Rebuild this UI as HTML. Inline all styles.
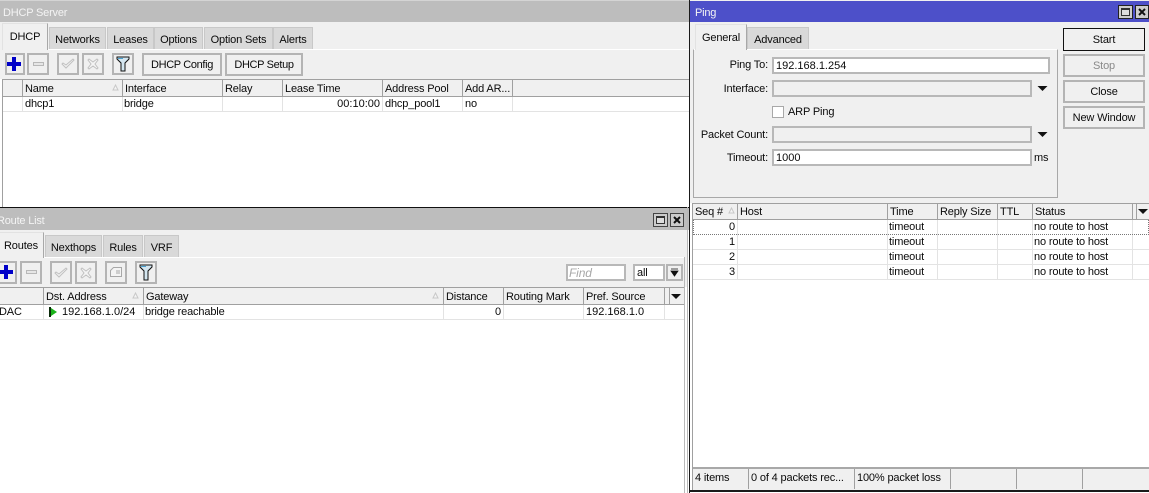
<!DOCTYPE html>
<html><head><meta charset="utf-8"><style>
html,body{margin:0;padding:0;background:#fff}
#r{position:relative;width:1149px;height:493px;overflow:hidden;background:#fff;font:11px/16px "Liberation Sans",sans-serif;letter-spacing:-.15px;color:#0a0a0a}
#r div,#r svg{position:absolute;box-sizing:border-box}
.t{white-space:nowrap}
.n{letter-spacing:0}
.w{color:#f4f4f4;letter-spacing:-.2px}
.tab{background:#d9d9d9;border:1px solid #c8c8c8;border-bottom:0;text-align:center;padding-top:4px}
.act{background:#f0f0f0;border:1px solid #e2e2e2;border-right-color:#a8a8a8;border-bottom:0;text-align:center;padding-top:5px}
.b{background:#f0f0f0;border:2px solid #b4b4b4;text-align:center;line-height:21px}
.c{letter-spacing:-.35px}
.d{width:1px;background:#a0a0a0}
.dl{width:1px;background:#e3e3e3}
.h{height:1px}
.f{border:2px solid #b8b8b8;background:#fff;padding-left:2px;line-height:15px}
.f2{border:2px solid #b8b8b8;background:#f0f0f0}
.l{text-align:right;white-space:nowrap}
</style></head><body><div id="r">

<!-- DHCP window -->
<div style="left:0;top:0;width:689px;height:207px;background:#fff"></div>
<div style="left:0;top:0;width:689px;height:22px;background:#bdbdbd;border-top:1px solid #d4d4d4"></div>
<div class="t w" style="left:3px;top:5px">DHCP Server</div>
<div style="left:0;top:22px;width:689px;height:57px;background:#f0f0f0"></div>
<div class="h" style="left:47px;top:49px;width:642px;background:#fff"></div>
<div class="h" style="left:2px;top:49px;width:1px;background:#fff"></div>
<div class="tab t" style="left:49px;top:27px;width:57px;height:22px">Networks</div>
<div class="tab t" style="left:107px;top:27px;width:47px;height:22px">Leases</div>
<div class="tab t" style="left:154px;top:27px;width:49px;height:22px">Options</div>
<div class="tab t" style="left:204px;top:27px;width:69px;height:22px">Option Sets</div>
<div class="tab t" style="left:273px;top:27px;width:40px;height:22px">Alerts</div>
<div class="act t" style="left:2px;top:23px;width:46px;height:27px">DHCP</div>

<div class="b" style="left:5px;top:53px;width:20px;height:22px"></div>
<div style="left:12px;top:57px;width:4px;height:14px;background:#0000c8"></div>
<div style="left:7px;top:62px;width:14px;height:4px;background:#0000c8"></div>
<div class="b" style="left:27px;top:53px;width:22px;height:22px"></div>
<div style="left:33px;top:62px;width:11px;height:4px;background:#e6e6e6;border:1px solid #b8b8b8"></div>
<div class="b" style="left:57px;top:53px;width:22px;height:22px"></div>
<svg style="left:61px;top:58px" width="14" height="12"><path d="M1 6l4 4 8-8-1-1-7 6-3-2z" fill="#f4f4f4" stroke="#c0c0c0"/></svg>
<div class="b" style="left:82px;top:53px;width:22px;height:22px"></div>
<svg style="left:87px;top:58px" width="12" height="12"><path d="M1 2l1-1 4 3 4-3 1 1-3 4 3 4-1 1-4-3-4 3-1-1 3-4z" fill="#f4f4f4" stroke="#c0c0c0"/></svg>
<div class="b" style="left:112px;top:53px;width:22px;height:22px"></div>
<svg style="left:116px;top:56px" width="14" height="16"><path d="M1 1h12v2l-4 4v8h-4v-8l-4-4z" fill="#d4e6f0" stroke="#111"/><path d="M2 2h5v1H2z" fill="#4aa0d0"/></svg>
<div class="b t c" style="left:142px;top:53px;width:80px;height:23px">DHCP Config</div>
<div class="b t c" style="left:225px;top:53px;width:78px;height:23px">DHCP Setup</div>

<div style="left:2px;top:79px;width:687px;height:18px;background:#f0f0f0;border-top:1px solid #a0a0a0;border-bottom:1px solid #a0a0a0"></div>
<div class="h" style="left:2px;top:111px;width:687px;background:#e3e3e3"></div>
<div style="left:2px;top:79px;width:1px;height:128px;background:#a0a0a0"></div>
<div class="d" style="left:22px;top:80px;height:16px"></div>
<div class="d" style="left:122px;top:80px;height:16px"></div>
<div class="d" style="left:222px;top:80px;height:16px"></div>
<div class="d" style="left:282px;top:80px;height:16px"></div>
<div class="d" style="left:382px;top:80px;height:16px"></div>
<div class="d" style="left:462px;top:80px;height:16px"></div>
<div class="d" style="left:512px;top:80px;height:16px"></div>
<div class="dl" style="left:22px;top:97px;height:14px"></div>
<div class="dl" style="left:122px;top:97px;height:14px"></div>
<div class="dl" style="left:222px;top:97px;height:14px"></div>
<div class="dl" style="left:282px;top:97px;height:14px"></div>
<div class="dl" style="left:382px;top:97px;height:14px"></div>
<div class="dl" style="left:462px;top:97px;height:14px"></div>
<div class="dl" style="left:512px;top:97px;height:14px"></div>
<div class="t" style="left:25px;top:81px">Name</div>
<svg style="left:112px;top:84px" width="7" height="7"><path d="M3.500 1L6 6H1z" fill="#f4f4f4" stroke="#c8c8c8"/></svg>
<div class="t" style="left:125px;top:81px">Interface</div>
<div class="t" style="left:225px;top:81px">Relay</div>
<div class="t" style="left:285px;top:81px">Lease Time</div>
<div class="t" style="left:385px;top:81px">Address Pool</div>
<div class="t" style="left:465px;top:81px">Add AR...</div>
<div class="t" style="left:25px;top:96px">dhcp1</div>
<div class="t" style="left:124px;top:96px">bridge</div>
<div class="l n" style="left:300px;width:80px;top:96px">00:10:00</div>
<div class="t" style="left:385px;top:96px">dhcp_pool1</div>
<div class="t" style="left:465px;top:96px">no</div>

<!-- Route window -->
<div class="h" style="left:0;top:207px;width:690px;background:#111"></div>
<div style="left:0;top:208px;width:689px;height:22px;background:#bdbdbd"></div>
<div class="t w" style="left:-3px;top:213px">Route List</div>
<div style="left:653px;top:213px;width:15px;height:14px;border:1px solid #444;background:#ccc"></div>
<div style="left:656px;top:216px;width:9px;height:8px;border:1px solid #333;border-top-width:2px;background:#ddd"></div>
<div style="left:670px;top:213px;width:14px;height:14px;border:1px solid #444;background:#ccc"></div>
<svg style="left:673px;top:216px" width="8" height="8"><path d="M1 1l6 6M7 1l-6 6" stroke="#111" stroke-width="2"/></svg>
<div style="left:0;top:230px;width:688px;height:57px;background:#f0f0f0"></div>
<div class="h" style="left:44px;top:257px;width:640px;background:#fff"></div>
<div style="left:684px;top:257px;width:1px;height:236px;background:#b8b8b8"></div>
<div class="tab t" style="left:45px;top:235px;width:57px;height:22px">Nexthops</div>
<div class="tab t" style="left:103px;top:235px;width:40px;height:22px">Rules</div>
<div class="tab t" style="left:144px;top:235px;width:35px;height:22px">VRF</div>
<div class="act t" style="left:-2px;top:232px;width:46px;height:26px">Routes</div>

<div class="b" style="left:-3px;top:261px;width:20px;height:23px"></div>
<div style="left:4px;top:265px;width:4px;height:14px;background:#0000c8"></div>
<div style="left:-1px;top:270px;width:14px;height:4px;background:#0000c8"></div>
<div class="b" style="left:20px;top:261px;width:22px;height:23px"></div>
<div style="left:26px;top:270px;width:11px;height:4px;background:#e6e6e6;border:1px solid #b8b8b8"></div>
<div class="b" style="left:50px;top:261px;width:22px;height:23px"></div>
<svg style="left:54px;top:267px" width="14" height="12"><path d="M1 6l4 4 8-8-1-1-7 6-3-2z" fill="#f4f4f4" stroke="#c0c0c0"/></svg>
<div class="b" style="left:75px;top:261px;width:22px;height:23px"></div>
<svg style="left:80px;top:267px" width="12" height="12"><path d="M1 2l1-1 4 3 4-3 1 1-3 4 3 4-1 1-4-3-4 3-1-1 3-4z" fill="#f4f4f4" stroke="#c0c0c0"/></svg>
<div class="b" style="left:105px;top:261px;width:22px;height:23px"></div>
<svg style="left:109px;top:266px" width="14" height="12"><path d="M1.500 4.500l3-3h8v9h-11zM7 5h4M7 7h4" fill="#f4f4f4" stroke="#a8a8a8"/></svg>
<div class="b" style="left:135px;top:261px;width:22px;height:23px"></div>
<svg style="left:139px;top:264px" width="14" height="17"><path d="M1 1h12v2l-4 4v9h-4v-9l-4-4z" fill="#d4e6f0" stroke="#111"/><path d="M2 2h5v1H2z" fill="#4aa0d0"/></svg>
<div class="f t" style="left:566px;top:264px;width:60px;height:17px;color:#a8a8a8;font-style:italic;padding-left:1px;font-size:12px">Find</div>
<div class="f t" style="left:633px;top:264px;width:32px;height:17px">all</div>
<div class="b" style="left:666px;top:264px;width:17px;height:17px"></div>
<svg style="left:670px;top:268px" width="9" height="9"><path d="M1 1h7M1 3h7L4.500 8z" fill="#111" stroke="#111" stroke-width=".8"/></svg>

<div style="left:0;top:287px;width:684px;height:18px;background:#f0f0f0;border-top:1px solid #a0a0a0;border-bottom:1px solid #a0a0a0"></div>
<div class="h" style="left:0;top:319px;width:684px;background:#e3e3e3"></div>
<div class="d" style="left:43px;top:288px;height:16px"></div>
<div class="d" style="left:143px;top:288px;height:16px"></div>
<div class="d" style="left:443px;top:288px;height:16px"></div>
<div class="d" style="left:503px;top:288px;height:16px"></div>
<div class="d" style="left:583px;top:288px;height:16px"></div>
<div class="d" style="left:664px;top:288px;height:16px"></div>
<div class="d" style="left:669px;top:288px;height:16px"></div>
<div class="dl" style="left:43px;top:305px;height:14px"></div>
<div class="dl" style="left:143px;top:305px;height:14px"></div>
<div class="dl" style="left:443px;top:305px;height:14px"></div>
<div class="dl" style="left:503px;top:305px;height:14px"></div>
<div class="dl" style="left:583px;top:305px;height:14px"></div>
<div class="dl" style="left:664px;top:305px;height:14px"></div>
<div class="t" style="left:46px;top:289px">Dst. Address</div>
<svg style="left:132px;top:292px" width="7" height="7"><path d="M3.500 1L6 6H1z" fill="#f4f4f4" stroke="#c8c8c8"/></svg>
<div class="t" style="left:146px;top:289px">Gateway</div>
<svg style="left:432px;top:292px" width="7" height="7"><path d="M3.500 1L6 6H1z" fill="#f4f4f4" stroke="#c8c8c8"/></svg>
<div class="t" style="left:446px;top:289px">Distance</div>
<div class="t" style="left:506px;top:289px">Routing Mark</div>
<div class="t" style="left:586px;top:289px">Pref. Source</div>
<svg style="left:670px;top:293px" width="12" height="7"><path d="M1 1h10L6 6z" fill="#111"/></svg>
<div class="t" style="left:-1px;top:304px">DAC</div>
<svg style="left:48px;top:306px" width="10" height="12"><rect x="1" y="1" width="2" height="10" fill="#0a2a0a"/><path d="M3 2l6 4-6 4z" fill="#19b219"/></svg>
<div class="t n" style="left:62px;top:304px">192.168.1.0/24</div>
<div class="t" style="left:145px;top:304px">bridge reachable</div>
<div class="l" style="left:440px;width:61px;top:304px">0</div>
<div class="t n" style="left:586px;top:304px">192.168.1.0</div>

<div style="left:687px;top:207px;width:1px;height:286px;background:#b8b8b8"></div>
<div style="left:689px;top:0;width:1px;height:493px;background:#1a1a1a"></div>

<!-- Ping window -->
<div style="left:690px;top:0;width:459px;height:490px;background:#fff"></div>
<div style="left:690px;top:0;width:459px;height:203px;background:#f0f0f0"></div>
<div style="left:690px;top:1px;width:459px;height:21px;background:#4d50c9"></div>
<div class="t w" style="left:695px;top:5px">Ping</div>
<div style="left:1118px;top:5px;width:15px;height:14px;border:1px solid #222;background:#ccc"></div>
<div style="left:1121px;top:8px;width:9px;height:8px;border:1px solid #333;border-top-width:2px;background:#ddd"></div>
<div style="left:1135px;top:5px;width:14px;height:14px;border:1px solid #222;background:#ccc"></div>
<svg style="left:1138px;top:8px" width="8" height="8"><path d="M1 1l6 6M7 1l-6 6" stroke="#111" stroke-width="2"/></svg>

<div style="left:693px;top:49px;width:365px;height:149px;border:1px solid #a8a8a8;border-top-color:#fff;background:#f0f0f0"></div>
<div class="tab t" style="left:747px;top:27px;width:62px;height:22px">Advanced</div>
<div class="act t" style="left:695px;top:24px;width:52px;height:26px">General</div>

<div class="l" style="left:690px;width:78px;top:57px">Ping To:</div>
<div class="f t n" style="left:772px;top:57px;width:278px;height:17px">192.168.1.254</div>
<div class="l" style="left:690px;width:78px;top:81px">Interface:</div>
<div class="f2" style="left:772px;top:80px;width:260px;height:17px"></div>
<svg style="left:1037px;top:85px" width="11" height="7"><path d="M0.500 1h10L5.500 6z" fill="#111"/></svg>
<div style="left:772px;top:106px;width:12px;height:12px;border:1px solid #a8a8a8;background:#fff"></div>
<div class="t" style="left:788px;top:104px">ARP Ping</div>
<div class="l" style="left:690px;width:78px;top:127px">Packet Count:</div>
<div class="f2" style="left:772px;top:126px;width:260px;height:17px"></div>
<svg style="left:1037px;top:131px" width="11" height="7"><path d="M0.500 1h10L5.500 6z" fill="#111"/></svg>
<div class="l" style="left:690px;width:78px;top:150px">Timeout:</div>
<div class="f t n" style="left:772px;top:149px;width:260px;height:17px">1000</div>
<div class="t" style="left:1034px;top:150px">ms</div>

<div class="b" style="left:1063px;top:28px;width:82px;height:23px;border-width:1px;border-color:#111;line-height:23px">Start</div>
<div class="b" style="left:1063px;top:54px;width:82px;height:23px;color:#8a8a8a">Stop</div>
<div class="b" style="left:1063px;top:80px;width:82px;height:23px">Close</div>
<div class="b" style="left:1063px;top:106px;width:82px;height:23px">New Window</div>

<div style="left:693px;top:203px;width:456px;height:17px;background:#f0f0f0;border-top:1px solid #a0a0a0;border-bottom:1px solid #a0a0a0"></div>
<div class="d" style="left:737px;top:204px;height:15px"></div>
<div class="d" style="left:887px;top:204px;height:15px"></div>
<div class="d" style="left:937px;top:204px;height:15px"></div>
<div class="d" style="left:997px;top:204px;height:15px"></div>
<div class="d" style="left:1032px;top:204px;height:15px"></div>
<div class="d" style="left:1132px;top:204px;height:15px"></div>
<div class="d" style="left:1136px;top:204px;height:15px"></div>
<div class="dl" style="left:737px;top:220px;height:59px"></div>
<div class="dl" style="left:887px;top:220px;height:59px"></div>
<div class="dl" style="left:937px;top:220px;height:59px"></div>
<div class="dl" style="left:997px;top:220px;height:59px"></div>
<div class="dl" style="left:1032px;top:220px;height:59px"></div>
<div class="dl" style="left:1132px;top:220px;height:59px"></div>
<div class="h" style="left:693px;top:249px;width:456px;background:#e3e3e3"></div>
<div class="h" style="left:693px;top:264px;width:456px;background:#e3e3e3"></div>
<div class="h" style="left:693px;top:279px;width:456px;background:#e3e3e3"></div>
<div style="left:693px;top:220px;width:456px;height:15px;border:1px dotted #777;border-top:0"></div>
<div class="t" style="left:695px;top:204px">Seq #</div>
<svg style="left:728px;top:207px" width="7" height="7"><path d="M3.500 1L6 6H1z" fill="#f4f4f4" stroke="#c8c8c8"/></svg>
<div class="t" style="left:740px;top:204px">Host</div>
<div class="t" style="left:890px;top:204px">Time</div>
<div class="t" style="left:940px;top:204px">Reply Size</div>
<div class="t" style="left:1000px;top:204px">TTL</div>
<div class="t" style="left:1035px;top:204px">Status</div>
<svg style="left:1137px;top:208px" width="12" height="7"><path d="M1 1h10L6 6z" fill="#111"/></svg>

<div class="l" style="left:700px;width:35px;top:219px">0</div>
<div class="t" style="left:889px;top:219px">timeout</div>
<div class="t" style="left:1034px;top:219px">no route to host</div>
<div class="l" style="left:700px;width:35px;top:234px">1</div>
<div class="t" style="left:889px;top:234px">timeout</div>
<div class="t" style="left:1034px;top:234px">no route to host</div>
<div class="l" style="left:700px;width:35px;top:249px">2</div>
<div class="t" style="left:889px;top:249px">timeout</div>
<div class="t" style="left:1034px;top:249px">no route to host</div>
<div class="l" style="left:700px;width:35px;top:264px">3</div>
<div class="t" style="left:889px;top:264px">timeout</div>
<div class="t" style="left:1034px;top:264px">no route to host</div>

<div style="left:692px;top:203px;width:1px;height:287px;background:#a0a0a0"></div>
<div style="left:693px;top:467px;width:456px;height:23px;background:#f0f0f0;border-top:2px solid #a8a8a8"></div>
<div class="d" style="left:748px;top:469px;height:20px"></div>
<div class="d" style="left:854px;top:469px;height:20px"></div>
<div class="d" style="left:950px;top:469px;height:20px"></div>
<div class="d" style="left:1016px;top:469px;height:20px"></div>
<div class="d" style="left:1082px;top:469px;height:20px"></div>
<div class="t" style="left:695px;top:470px">4 items</div>
<div class="t" style="left:751px;top:470px">0 of 4 packets rec...</div>
<div class="t" style="left:857px;top:470px">100% packet loss</div>
<div style="left:689px;top:490px;width:460px;height:2px;background:#1a1a1a"></div>
</div></body></html>
